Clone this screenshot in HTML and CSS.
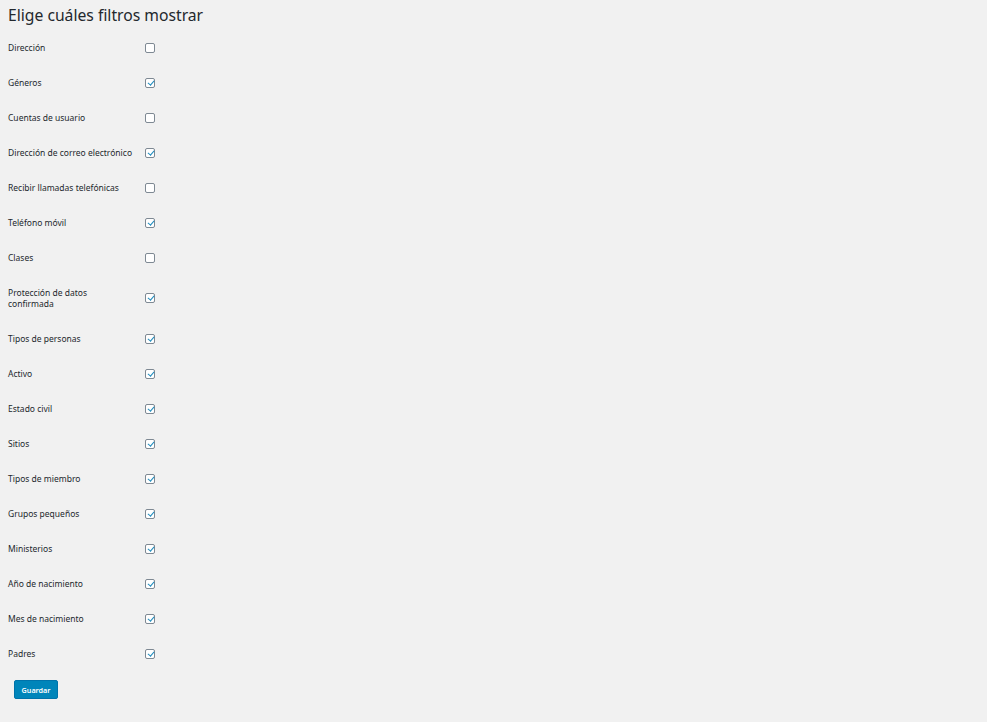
FILE: index.html
```html
<!DOCTYPE html>
<html lang="es">
<head>
<meta charset="utf-8">
<title>Filtros</title>
<link rel="stylesheet" href="styles.css">
</head>
<body>
<div class="wrap">
  <h1 class="title">Elige cuáles filtros mostrar</h1>
  <form class="form-table">
    <label class="row"><span class="lbl">Dirección</span><span class="cell"><input type="checkbox"></span></label>
    <label class="row"><span class="lbl">Géneros</span><span class="cell"><input type="checkbox" checked></span></label>
    <label class="row"><span class="lbl">Cuentas de usuario</span><span class="cell"><input type="checkbox"></span></label>
    <label class="row"><span class="lbl">Dirección de correo electrónico</span><span class="cell"><input type="checkbox" checked></span></label>
    <label class="row"><span class="lbl">Recibir llamadas telefónicas</span><span class="cell"><input type="checkbox"></span></label>
    <label class="row"><span class="lbl">Teléfono móvil</span><span class="cell"><input type="checkbox" checked></span></label>
    <label class="row"><span class="lbl">Clases</span><span class="cell"><input type="checkbox"></span></label>
    <label class="row"><span class="lbl">Protección de datos confirmada</span><span class="cell"><input type="checkbox" checked></span></label>
    <label class="row"><span class="lbl">Tipos de personas</span><span class="cell"><input type="checkbox" checked></span></label>
    <label class="row"><span class="lbl">Activo</span><span class="cell"><input type="checkbox" checked></span></label>
    <label class="row"><span class="lbl">Estado civil</span><span class="cell"><input type="checkbox" checked></span></label>
    <label class="row"><span class="lbl">Sitios</span><span class="cell"><input type="checkbox" checked></span></label>
    <label class="row"><span class="lbl">Tipos de miembro</span><span class="cell"><input type="checkbox" checked></span></label>
    <label class="row"><span class="lbl">Grupos pequeños</span><span class="cell"><input type="checkbox" checked></span></label>
    <label class="row"><span class="lbl">Ministerios</span><span class="cell"><input type="checkbox" checked></span></label>
    <label class="row"><span class="lbl">Año de nacimiento</span><span class="cell"><input type="checkbox" checked></span></label>
    <label class="row"><span class="lbl">Mes de nacimiento</span><span class="cell"><input type="checkbox" checked></span></label>
    <label class="row"><span class="lbl">Padres</span><span class="cell"><input type="checkbox" checked></span></label>
    <div class="actions"><button type="button" class="btn">Guardar</button></div>
  </form>
</div>
</body>
</html>
```
FILE: styles.css
```css
html, body {
  margin: 0;
  padding: 0;
  background: #f1f1f1;
}
body {
  font-family: "Noto Sans", "Open Sans", sans-serif;
  color: #23282d;
}
.wrap {
  padding: 0 0 0 8px;
}
.title {
  margin: 0;
  padding: 4px 0 4px;
  font-size: 15.7px;
  line-height: 22px;
  font-weight: 400;
  color: #23282d;
}
.form-table {
  display: flex;
  flex-direction: column;
}
.row {
  display: grid;
  grid-template-columns: 137px auto;
  align-items: center;
  padding: 12px 0;
}
.lbl {
  font-size: 8.5px;
  line-height: 11px;
  color: #23282d;
  max-width: 125.5px;
}
.cell {
  display: flex;
  align-items: center;
}
input[type="checkbox"] {
  -webkit-appearance: none;
  appearance: none;
  margin: 0;
  width: 10px;
  height: 10px;
  box-sizing: border-box;
  border: 1px solid #7e8993;
  border-radius: 2px;
  background: #fff;
  position: relative;
}
input[type="checkbox"]:checked::before {
  content: "";
  position: absolute;
  left: 2.6px;
  top: 0px;
  width: 2.6px;
  height: 5.2px;
  border-right: 1.6px solid #1e8cbe;
  border-bottom: 1.6px solid #1e8cbe;
  transform: rotate(40deg);
}
.actions {
  display: flex;
  padding: 9px 0 0 6px;
}
.btn {
  font-family: inherit;
  font-size: 7.2px;
  font-weight: 600;
  color: #fff;
  background: #0085ba;
  border: 1px solid #0073aa;
  border-radius: 2px;
  width: 44px;
  height: 19px;
  padding: 0;
  cursor: pointer;
}
```
